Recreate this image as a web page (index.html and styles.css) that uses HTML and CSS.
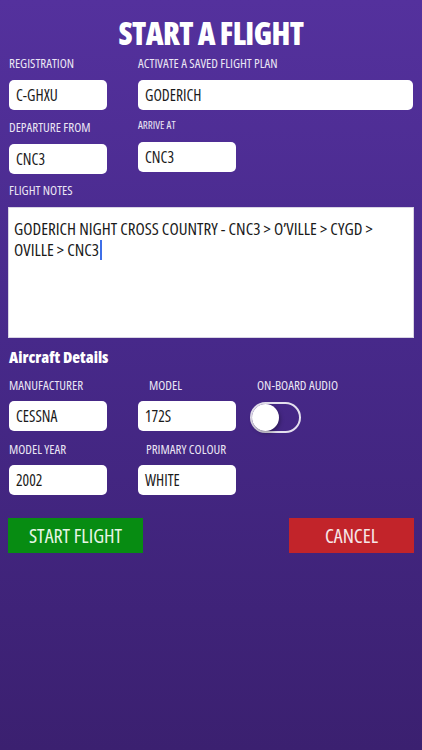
FILE: index.html
```html
<!DOCTYPE html>
<html lang="en">
<head>
<meta charset="utf-8">
<title>Start a Flight</title>
<link rel="stylesheet" href="styles.css">
</head>
<body>
<main class="page">
  <h1 class="title">START A FLIGHT</h1>

  <section class="top">
    <div class="col col-left">
      <label class="label">REGISTRATION</label>
      <div class="field">C-GHXU</div>
      <label class="label label-dep">DEPARTURE FROM</label>
      <div class="field">CNC3</div>
    </div>
    <div class="col col-right">
      <label class="label">ACTIVATE A SAVED FLIGHT PLAN</label>
      <div class="field field-wide">GODERICH</div>
      <label class="label label-small">ARRIVE AT</label>
      <div class="field field-arrive">CNC3</div>
    </div>
  </section>

  <label class="label label-notes">FLIGHT NOTES</label>
  <div class="notes">GODERICH NIGHT CROSS COUNTRY - CNC3 &gt; O’VILLE &gt; CYGD &gt; OVILLE &gt; CNC3<span class="caret"></span></div>

  <h2 class="section-title">Aircraft Details</h2>

  <section class="grid-row row-1">
    <div class="cell c1">
      <label class="label">MANUFACTURER</label>
      <div class="field">CESSNA</div>
    </div>
    <div class="cell c2">
      <label class="label label-model">MODEL</label>
      <div class="field">172S</div>
    </div>
    <div class="cell c3">
      <label class="label label-audio">ON-BOARD AUDIO</label>
      <div class="switch"><span class="thumb"></span></div>
    </div>
  </section>

  <section class="grid-row row-2">
    <div class="cell c1">
      <label class="label">MODEL YEAR</label>
      <div class="field">2002</div>
    </div>
    <div class="cell c2">
      <label class="label label-colour">PRIMARY COLOUR</label>
      <div class="field">WHITE</div>
    </div>
  </section>

  <div class="buttons">
    <button class="btn btn-start">START FLIGHT</button>
    <button class="btn btn-cancel">CANCEL</button>
  </div>
</main>
</body>
</html>
```
FILE: styles.css
```css
html, body {
  margin: 0;
  padding: 0;
}
body {
  width: 422px;
  min-height: 750px;
  background: linear-gradient(180deg, #54319d 0%, #47298a 45%, #3b2070 100%);
  font-family: "Open Sans", "DejaVu Sans", sans-serif;
  font-stretch: 75%;
  color: #ece8f4;
}
.page {
  padding: 0 8px;
  display: flex;
  flex-direction: column;
}
.title {
  margin: 0;
  padding-top: 14px;
  height: 38px;
  line-height: 38px;
  font-size: 31px;
  font-weight: 800;
  color: #ffffff;
  text-align: center;
  letter-spacing: -0.6px;
}
.label {
  display: block;
  height: 16px;
  line-height: 16px;
  font-size: 13px;
  font-weight: 500;
  color: #ebe6f4;
  white-space: nowrap;
}
.top {
  display: flex;
  gap: 31px;
  margin-top: 3px;
}
.col {
  display: flex;
  flex-direction: column;
}
.col-left {
  width: 98px;
  padding-left: 1px;
}
.col-right {
  flex: 1;
}
.field {
  box-sizing: border-box;
  width: 98px;
  height: 30px;
  margin-top: 9px;
  padding-left: 7px;
  background: #ffffff;
  border-radius: 5px;
  color: #1a1a1a;
  font-size: 15.5px;
  line-height: 30px;
}
.field-wide {
  width: 275px;
}
.label-dep {
  margin-top: 9px;
}
.label-small {
  margin-top: 7px;
  font-size: 11px;
}
.field-arrive {
  margin-top: 9px;
}
.label-notes {
  margin-top: 8px;
  padding-left: 1px;
}
.notes {
  box-sizing: border-box;
  margin-top: 9px;
  height: 131px;
  padding: 10px 24px 0 5px;
  background: #ffffff;
  border: 1px solid #d8d4e4;
  color: #1a1a1a;
  font-size: 17px;
  line-height: 21px;
}
.caret {
  display: inline-block;
  width: 2px;
  height: 20px;
  margin-left: 1px;
  vertical-align: -4px;
  background: #3f6fe8;
}
.section-title {
  margin: 10px 0 0;
  padding-left: 1px;
  height: 18px;
  line-height: 18px;
  font-size: 16px;
  font-weight: 800;
  color: #ffffff;
}
.grid-row {
  display: flex;
  padding-left: 1px;
}
.row-1 {
  margin-top: 11px;
}
.row-2 {
  margin-top: 8px;
}
.row-1 .field, .row-2 .field {
  margin-top: 8px;
}
.c1 {
  width: 98px;
  margin-right: 31px;
}
.c2 {
  width: 98px;
  margin-right: 14px;
}
.label-model {
  padding-left: 11px;
}
.label-colour {
  padding-left: 8px;
}
.label-audio {
  padding-left: 7px;
}
.switch {
  box-sizing: border-box;
  position: relative;
  margin-top: 9px;
  width: 51px;
  height: 31px;
  border: 2px solid #e4e0ee;
  border-radius: 16px;
}
.thumb {
  position: absolute;
  left: 0;
  top: 0;
  width: 27px;
  height: 27px;
  border-radius: 50%;
  background: #ffffff;
  box-shadow: 1px 2px 4px rgba(0, 0, 0, 0.35);
}
.buttons {
  display: flex;
  justify-content: space-between;
  margin-top: 23px;
}
.btn {
  height: 35px;
  border: none;
  border-radius: 0;
  font-family: inherit;
  font-stretch: 75%;
  font-size: 20px;
  font-weight: 400;
  padding: 0;
  cursor: pointer;
}
.btn-start {
  width: 135px;
  background: #078c12;
  color: #e6f6e6;
}
.btn-cancel {
  width: 125px;
  background: #c2242a;
  color: #f6e6e8;
}
```
